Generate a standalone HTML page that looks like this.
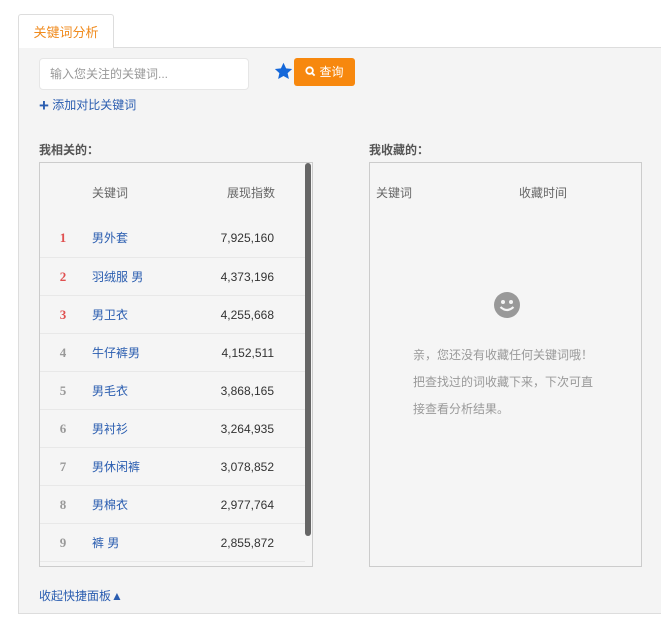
<!DOCTYPE html>
<html><head><meta charset="utf-8"><style>
*{margin:0;padding:0;box-sizing:border-box}
body{width:661px;height:632px;background:#fff;font-family:"Liberation Sans","Microsoft YaHei","Noto Sans CJK SC",sans-serif;font-size:12px;color:#333;position:relative;overflow:hidden}
.a{position:absolute}
.tab{left:18px;top:14px;width:96px;height:34px;border:1px solid #ddd;border-bottom:none;background:#fff;border-radius:3px 3px 0 0;color:#f08a1c;font-size:13px;line-height:36px;text-align:center;z-index:2}
.panel{left:18px;top:47px;width:650px;height:567px;background:#f4f4f4;border:1px solid #ddd}
.inp{left:39px;top:58px;width:210px;height:32px;background:#fff;border:1px solid #e6e6e6;border-radius:4px;color:#999;line-height:31px;padding-left:10px}
.btn{left:294px;top:58px;width:61px;height:28px;background:#f7880e;border-radius:3px;color:#fff;line-height:28px;text-align:center;font-size:12px}
.blue{color:#2a5db0}
.box{background:#f5f5f5;border:1px solid #ccc}
.row{position:absolute;left:0;width:265px;height:38px;border-top:1px solid #e8e8e8;line-height:38px}
.rk{position:absolute;left:14px;width:18px;text-align:center;font-weight:bold;font-family:"Liberation Serif",serif;font-size:13px}
.kw{position:absolute;left:52px;color:#2a5db0}
.nm{position:absolute;right:31px;color:#333;font-size:12px}
.g{color:#999;line-height:27px}
</style></head><body>
<div class="a tab">关键词分析</div>
<div class="a panel"></div>
<div class="a inp">输入您关注的关键词...</div>
<svg class="a" style="left:274px;top:62px" width="19" height="19" viewBox="0 0 24 24"><path d="M12 1l3.3 7 7.6.8-5.7 5.2 1.6 7.5L12 17.7 5.2 21.5l1.6-7.5L1.1 8.8 8.7 8z" fill="#1467d9"/></svg>
<div class="a btn"><svg width="11" height="11" viewBox="0 0 12 12" style="vertical-align:-1px;margin-right:3px"><circle cx="5" cy="5" r="3.6" stroke="#fff" stroke-width="2" fill="none"/><path d="M7.5 7.5l3 3" stroke="#fff" stroke-width="2"/></svg>查询</div>
<div class="a blue" style="left:39px;top:96px;font-size:12px"><span style="font-size:17px;font-weight:bold;vertical-align:-2px">+</span> 添加对比关键词</div>
<div class="a" style="left:39px;top:141px;font-weight:bold;color:#555">我相关的：</div>
<div class="a" style="left:369px;top:141px;font-weight:bold;color:#555">我收藏的：</div>
<div class="a box" style="left:39px;top:162px;width:274px;height:405px;overflow:hidden">
<div class="a" style="left:52px;top:21px;color:#666">关键词</div>
<div class="a" style="left:187px;top:21px;color:#666">展现指数</div>
<div class="a" style="right:1px;top:0;width:6px;height:373px;background:#666;border-radius:3px"></div>
<div class="row" style="top:56px;border-top:none"><span class="rk" style="color:#e05050">1</span><span class="kw">男外套</span><span class="nm">7,925,160</span></div>
<div class="row" style="top:94px"><span class="rk" style="color:#e05050">2</span><span class="kw">羽绒服 男</span><span class="nm">4,373,196</span></div>
<div class="row" style="top:132px"><span class="rk" style="color:#e05050">3</span><span class="kw">男卫衣</span><span class="nm">4,255,668</span></div>
<div class="row" style="top:170px"><span class="rk" style="color:#999">4</span><span class="kw">牛仔裤男</span><span class="nm">4,152,511</span></div>
<div class="row" style="top:208px"><span class="rk" style="color:#999">5</span><span class="kw">男毛衣</span><span class="nm">3,868,165</span></div>
<div class="row" style="top:246px"><span class="rk" style="color:#999">6</span><span class="kw">男衬衫</span><span class="nm">3,264,935</span></div>
<div class="row" style="top:284px"><span class="rk" style="color:#999">7</span><span class="kw">男休闲裤</span><span class="nm">3,078,852</span></div>
<div class="row" style="top:322px"><span class="rk" style="color:#999">8</span><span class="kw">男棉衣</span><span class="nm">2,977,764</span></div>
<div class="row" style="top:360px"><span class="rk" style="color:#999">9</span><span class="kw">裤 男</span><span class="nm">2,855,872</span></div>
<div class="row" style="top:398px"></div>
</div>
<div class="a box" style="left:369px;top:162px;width:273px;height:405px">
<div class="a" style="left:6px;top:21px;color:#666">关键词</div>
<div class="a" style="left:149px;top:21px;color:#666">收藏时间</div>
<svg class="a" style="left:123px;top:128px" width="28" height="28" viewBox="0 0 28 28"><circle cx="14" cy="14" r="13" fill="#999"/><circle cx="10" cy="11" r="2" fill="#f5f5f5"/><circle cx="18" cy="11" r="2" fill="#f5f5f5"/><path d="M7.5 16q6.5 6 13 0" stroke="#f5f5f5" stroke-width="2.2" fill="none"/></svg>
<div class="a g" style="left:43px;top:179px;width:200px">亲，您还没有收藏任何关键词哦！<br>把查找过的词收藏下来，下次可直<br>接查看分析结果。</div>
</div>
<div class="a blue" style="left:39px;top:587px">收起快捷面板<span style="font-size:12px">▲</span></div>
</body></html>
